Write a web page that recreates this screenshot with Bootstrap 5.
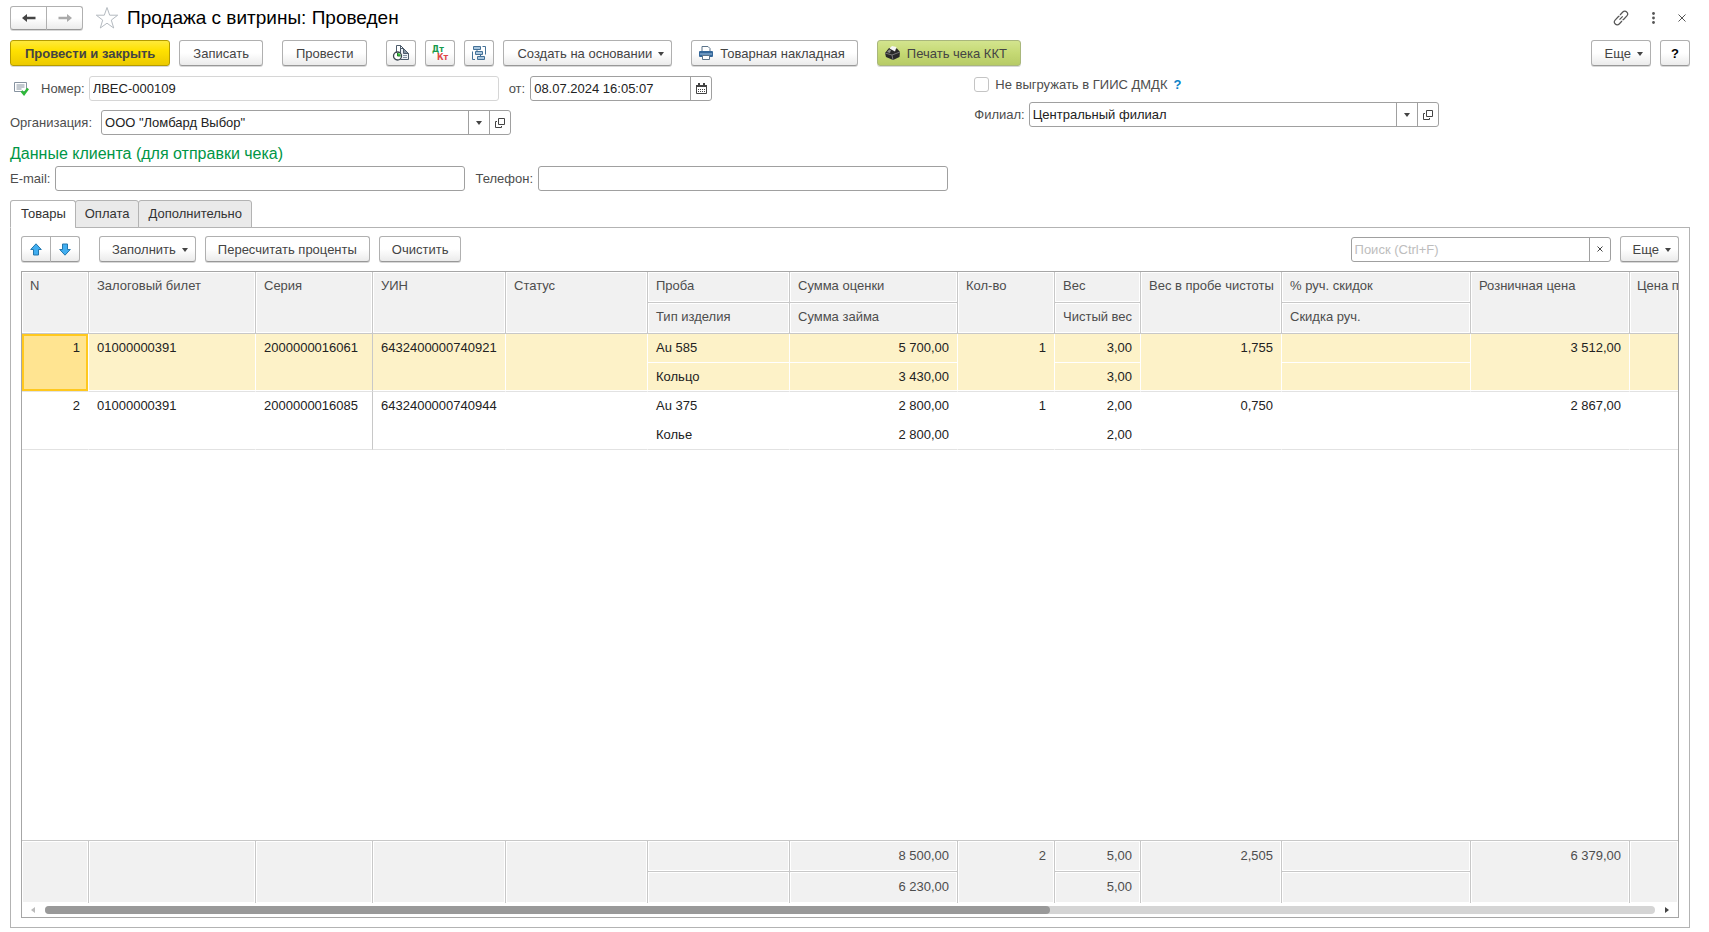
<!DOCTYPE html>
<html lang="ru">
<head>
<meta charset="utf-8">
<meta name="viewport" content="width=device-width, initial-scale=1">
<title>Продажа с витрины: Проведен</title>
<link href="https://cdn.jsdelivr.net/npm/bootstrap@5.3.0/dist/css/bootstrap.min.css" rel="stylesheet">
<style>
  :root { --line: #a6a6a6; --soft: #c8c8c8; --head: #f1f1f1; --ink: #4d4d4d; }
  body { font: 13px/17px "Liberation Sans", Arial, sans-serif; color: var(--ink); background: #fff; }
  .page { padding: 6px 19px 4px 10px; }
  h1 { font-size: 19px; line-height: 24px; color: #000; }
  h2 { font-size: 16px; line-height: 18px; color: #009646; margin: 10px 0 3px; }

  .btn {
    --bs-btn-font-size: 13px; --bs-btn-line-height: 17px; --bs-btn-padding-y: 0; --bs-btn-padding-x: 13px;
    --bs-btn-color: #444; --bs-btn-border-color: #b0b0b0; --bs-btn-border-radius: 3px;
    --bs-btn-hover-color: #222; --bs-btn-hover-border-color: #909090;
    height: 26px; display: inline-flex; align-items: center; justify-content: center; white-space: nowrap;
    background: linear-gradient(#fff 50%, #ebebeb); border-bottom-color: #989898; box-shadow: 0 1px 0 #d8d8d8;
  }
  .btn-main { --bs-btn-padding-x: 14px; font-weight: bold; background: linear-gradient(#ffe93b, #ffe100 40%, #ecca00); border-color: #b59c00; }
  .btn-pic { --bs-btn-padding-x: 12px; padding-left: 6px; gap: 6px; }
  .btn-receipt { --bs-btn-padding-x: 13px; background: linear-gradient(#d3e48e, #c5d974 50%, #b7cb66); border-color: #a9b77c; }
  .btn-square { --bs-btn-padding-x: 0; width: 30px; }
  .btn.dropdown-toggle { padding-right: 7px; }
  .btn.dropdown-toggle::after { border-width: 4px 3px 0; margin-left: 6px; margin-top: 2px; }
  .nav-pair .btn { height: 24px; width: 37px; --bs-btn-padding-x: 0; }
  .panel .btn { --bs-btn-padding-x: 12px; }
  .panel .move-pair .btn { width: 30px; --bs-btn-padding-x: 0; }
  .plain { border: 0; background: none; padding: 0; display: inline-flex; }
  .bar { gap: 9px; }
  .tb-gap { margin-left: 10px; }
  .window-tools { gap: 22px; }

  .fld { height: 25px; border: 1px solid #a0a0a0; border-radius: 3px; width: 410px; display: flex; background: #fff; }
  .fld input { flex: 1; min-width: 0; border: 0; outline: 0; background: none; padding: 0 3px; color: #222; border-radius: 3px; }
  .fld button { border: 0; border-left: 1px solid #a0a0a0; background: none; width: 21px; padding: 0; display: flex; align-items: center; justify-content: center; }
  .fld input::placeholder { color: #bdbdbd; opacity: 1; }
  .fld.readonly { border-color: #d6d6d6; }
  .fld.date { width: 182px; }
  .fld.search { width: 260px; }
  .cap { margin-right: 5px; }
  .cap-next { margin-left: 10px; }
  .line-top { margin-top: 10px; }
  .line-next { margin-top: 9px; }
  .col-left { width: 57.4%; }
  .form-check-input { width: 15px; height: 15px; margin: 0 6px 0 0; border-color: #c4c4c4; border-radius: 3px !important; }
  .hint { color: #0a82c8; text-decoration: none; font-weight: bold; margin-left: 6px; }

  .nav-tabs { --bs-nav-tabs-border-width: 0; margin-top: 9px; position: relative; z-index: 1; margin-bottom: -1px; }
  .nav-tabs .nav-link { height: 28px; padding: 0 9px 2px; margin: 0 0 0 -1px; border: 1px solid #b3b3b3; border-radius: 3px 3px 0 0; background: #eaeaea; color: #333; }
  .nav-tabs .nav-item:first-child .nav-link { margin-left: 0; padding-left: 10px; }
  .nav-tabs .nav-link.active { background: #fff; border-color: #b3b3b3 #b3b3b3 #fff; color: #333; }
  .panel { border: 1px solid #b3b3b3; padding: 8px 10px 9px; }

  .grid { border: 1px solid var(--line); margin-top: 9px; overflow: hidden; }
  .grid table { width: 100%; table-layout: fixed; border-collapse: separate; border-spacing: 0; }
  .grid th, .grid td { font-weight: normal; vertical-align: top; padding: 6px 8px 0; white-space: nowrap; overflow: hidden; border-right: 1px solid transparent; }
  .grid th.edge { border-right: 0; padding-left: 7px; padding-right: 0; }
  .grid td.edge { border-right: 0; }
  .sum td, .grid th { height: 31px; background: var(--head); border-right-color: var(--soft); border-bottom: 1px solid var(--soft); box-shadow: inset 0 0 0 1px #fff; }
  .grid .sum { border-top: 1px solid var(--soft); }
  .sum tr:last-child td, .sum td[rowspan] { border-bottom: 0; }
  .rows td { height: 29px; color: #222; }
  .rows tr:nth-child(even) td, .rows td[rowspan] { border-bottom: 1px solid #e2e2e2; }
  .rows .series { border-right-color: var(--soft); }
  .rows .picked td { background: #fdf2c8; border-right-color: #fff; box-shadow: inset 0 -1px 0 #fff; }
  .rows .picked .series { border-right-color: var(--soft); }
  .rows .picked .current { background: #ffe491; box-shadow: inset 0 0 0 2px #ffc81e; }
  .grid th, .grid .rows td { padding-top: 5px; }
  .track { height: 8px; border-radius: 4px; background: #d5d5d5; }
  .thumb { height: 8px; border-radius: 4px; background: #999; width: 62.4%; }
  .scroll { padding: 3px 9px; height: 14px; gap: 9px; }
</style>
</head>
<body>
<div class="page min-vh-100 d-flex flex-column">

  <header class="d-flex align-items-center">
    <div class="btn-group nav-pair">
      <button class="btn" type="button" aria-label="Назад"><svg width="16" height="12" viewBox="0 0 16 12"><path d="M1 6l5-4v2.800h8.500v2.400H6V10z" fill="#444"/></svg></button>
      <button class="btn" type="button" aria-label="Вперед"><svg width="16" height="12" viewBox="0 0 16 12"><path d="M15 6l-5-4v2.800H1.500v2.400H10V10z" fill="#aaa"/></svg></button>
    </div>
    <button class="plain ms-2 me-2 ps-1" type="button" aria-label="В избранное"><svg width="24" height="24" viewBox="0 0 24 24"><path d="M12 1.500l2.700 7.700h8l-6.400 4.900 2.400 7.900-6.700-4.800L5.300 22l2.400-7.900L1.300 9.200h8z" fill="#fff" stroke="#b4bac0"/></svg></button>
    <h1 class="m-0">Продажа с витрины: Проведен</h1>
    <div class="ms-auto d-flex align-items-center window-tools me-1">
      <button class="plain" type="button" aria-label="Ссылка"><svg width="16" height="16" viewBox="0 0 16 16" fill="none" stroke="#555" stroke-width="1.200"><path d="M7 5l2.800-3a2.700 2.700 0 0 1 3.900 0 2.700 2.700 0 0 1 .2 3.800L11 9a2.500 2.500 0 0 1-1.500.8M9 11l-2.800 3a2.700 2.700 0 0 1-3.900 0 2.700 2.700 0 0 1-.2-3.800L5 7a2.500 2.500 0 0 1 1.500-.8M6.500 9.700l3.200-3.400"/></svg></button>
      <button class="plain" type="button" aria-label="Меню"><svg width="5" height="12" viewBox="0 0 5 12" fill="#555"><circle cx="2.500" cy="1.500" r="1.400"/><circle cx="2.500" cy="6" r="1.400"/><circle cx="2.500" cy="10.500" r="1.400"/></svg></button>
      <button class="plain" type="button" aria-label="Закрыть"><svg width="8" height="8" viewBox="0 0 8 8" stroke="#555"><path d="M.5.5l7 7M7.500.5l-7 7"/></svg></button>
    </div>
  </header>

  <div class="d-flex bar line-top">
    <button class="btn btn-main" type="button">Провести и закрыть</button>
    <button class="btn" type="button">Записать</button>
    <button class="btn tb-gap" type="button">Провести</button>
    <button class="btn btn-square tb-gap" type="button" aria-label="История"><svg width="18" height="18" viewBox="0 0 18 18"><path d="M4.500 8V1.500H8.500V5" fill="#fff" stroke="#4c5b6b"/><path d="M8.500 15.500v-11h3l5 5v6z" fill="#eef2f6" stroke="#4c5b6b"/><path d="M8.500 1.500l3 3v5h5l-5-5z" fill="#8494a4" stroke="#4c5b6b"/><path d="M11 11.500h4M11 13.500h4" stroke="#8494a4"/><circle cx="5.500" cy="12" r="4" fill="#fff" stroke="#3c4650" stroke-width="1.300"/><path d="M5.500 12V9a3 3 0 0 1 3 3z" fill="#37c837"/><path d="M5.500 9v3h3" stroke="#237a2c" fill="none"/></svg></button>
    <button class="btn btn-square" type="button" aria-label="Проводки"><svg width="20" height="20" viewBox="0 0 20 20" font-family="DejaVu Sans, sans-serif" font-weight="bold" font-size="8"><text x="2" y="9" fill="#189a4c">Дт</text><text x="7" y="17" fill="#df4747">Кт</text></svg></button>
    <button class="btn btn-square" type="button" aria-label="Структура"><svg width="16" height="16" viewBox="0 0 16 16" fill="#a9c6de" stroke="#447197"><path d="M2.500 1.500h7v3h-7zM4.500 6.500h7v3h-7zM6.500 11.500h7v3h-7z"/><path d="M11.500 1.500h3v8M4 14.500H1.500v-8M6 4.500v2M9.500 9.500v2" fill="none"/></svg></button>
    <button class="btn dropdown-toggle" type="button">Создать на основании</button>
    <button class="btn btn-pic tb-gap" type="button"><svg width="16" height="16" viewBox="0 0 16 16"><path d="M4 6V1.500h6l2 2V6" fill="#fff" stroke="#5b7389"/><rect x="1" y="6" width="14" height="6" rx="1" fill="#34679a"/><path d="M2 9h12" stroke="#9fc3e2"/><path d="M4.500 10.500h7v4h-7z" fill="#fff" stroke="#5b7389"/></svg>Товарная накладная</button>
    <button class="btn btn-pic btn-receipt tb-gap" type="button"><svg width="17" height="15" viewBox="0 0 17 15"><path d="M1 7l4-5 8 .5 3 3.500-.5 5-6.500 3L2 11z" fill="#292929"/><path d="M5.500 2.500L8 0l4.500 1-1.500 4.500z" fill="#f5f5f5"/><path d="M1 7l7 2 8-3M8 9l1 5" stroke="#777" fill="none"/><path d="M3 6l2-2.500 2 .5-1 3z" fill="#8a8a8a"/></svg>Печать чека ККТ</button>
    <button class="btn dropdown-toggle ms-auto" type="button">Еще</button>
    <button class="btn btn-square" type="button"><b class="text-black">?</b></button>
  </div>

  <div class="d-flex line-top">
    <div class="col-left">
      <div class="d-flex align-items-center">
        <svg class="ms-1 me-2" width="15" height="14" viewBox="0 0 15 14"><path d="M.5.500h12v9H.5z" fill="#fff" stroke="#8793a0"/><path d="M2.500 3h8M2.500 5h8M2.500 7h5" stroke="#8793a0"/><path d="M7.500 9l2.500 3 4-5.500" stroke="#2eb83a" stroke-width="2.500" fill="none"/></svg>
        <label for="num" class="ps-1 me-1">Номер:</label>
        <div class="fld readonly"><input id="num" value="ЛВЕС-000109" readonly></div>
        <label for="dt" class="cap cap-next">от:</label>
        <div class="fld date"><input id="dt" value="08.07.2024 16:05:07"><button type="button" aria-label="Календарь"><svg width="11" height="11" viewBox="0 0 11 11"><path d="M.5 2.500h10v8H.5z" fill="#fff" stroke="#444"/><path d="M0 3h11" stroke="#444" stroke-width="2"/><path d="M3 0v2M8 0v2" stroke="#444" stroke-width="2"/><path d="M2 6.500h7M2 8.500h7" stroke="#444" stroke-dasharray="1 1"/></svg></button></div>
      </div>
      <div class="d-flex align-items-center line-next">
        <label for="org" class="cap pe-1">Организация:</label>
        <div class="fld"><input id="org" value="ООО &quot;Ломбард Выбор&quot;"><button type="button" aria-label="Выбрать"><svg width="6" height="4" viewBox="0 0 6 4"><path d="M0 0h6L3 4z" fill="#444"/></svg></button><button type="button" aria-label="Открыть"><svg width="10" height="10" viewBox="0 0 10 10" fill="none" stroke="#444"><path d="M3.500.5h6v6h-6zM2 3.500H.5v6h6V8"/></svg></button></div>
      </div>
    </div>
    <div>
      <div class="d-flex align-items-center">
        <input class="form-check-input" type="checkbox" id="noexp"><label for="noexp">Не выгружать в ГИИС ДМДК</label><a href="#" class="hint">?</a>
      </div>
      <div class="d-flex align-items-center line-next">
        <label for="fil" class="me-1">Филиал:</label>
        <div class="fld"><input id="fil" value="Центральный филиал"><button type="button" aria-label="Выбрать"><svg width="6" height="4" viewBox="0 0 6 4"><path d="M0 0h6L3 4z" fill="#444"/></svg></button><button type="button" aria-label="Открыть"><svg width="10" height="10" viewBox="0 0 10 10" fill="none" stroke="#444"><path d="M3.500.5h6v6h-6zM2 3.500H.5v6h6V8"/></svg></button></div>
      </div>
    </div>
  </div>

  <h2>Данные клиента (для отправки чека)</h2>
  <div class="d-flex align-items-center">
    <label for="mail" class="cap">E-mail:</label>
    <div class="fld"><input id="mail" type="email"></div>
    <label for="tel" class="cap cap-next">Телефон:</label>
    <div class="fld"><input id="tel" type="tel"></div>
  </div>

  <ul class="nav nav-tabs">
    <li class="nav-item"><button class="nav-link active" type="button">Товары</button></li>
    <li class="nav-item"><button class="nav-link" type="button">Оплата</button></li>
    <li class="nav-item"><button class="nav-link" type="button">Дополнительно</button></li>
  </ul>

  <main class="panel flex-grow-1 d-flex flex-column">
    <div class="d-flex align-items-center bar">
      <div class="btn-group move-pair">
        <button class="btn" type="button" aria-label="Вверх"><svg width="12" height="13" viewBox="0 0 12 13"><path d="M6 .8l5.300 5.700H8.500v5.500h-5V6.500H.7z" fill="#41aef0" stroke="#2477ad"/></svg></button>
        <button class="btn" type="button" aria-label="Вниз"><svg width="12" height="13" viewBox="0 0 12 13"><path d="M6 12.200l5.300-5.700H8.500V1h-5v5.500H.7z" fill="#41aef0" stroke="#2477ad"/></svg></button>
      </div>
      <button class="btn dropdown-toggle tb-gap" type="button">Заполнить</button>
      <button class="btn" type="button">Пересчитать проценты</button>
      <button class="btn" type="button">Очистить</button>
      <div class="fld search ms-auto"><input type="text" placeholder="Поиск (Ctrl+F)" aria-label="Поиск"><button type="button" aria-label="Очистить поиск"><svg width="6" height="6" viewBox="0 0 6 6" stroke="#444"><path d="M.5.5l5 5M5.500.5l-5 5"/></svg></button></div>
      <button class="btn dropdown-toggle" type="button">Еще</button>
    </div>

    <div class="grid flex-grow-1 d-flex flex-column">
      <table>
        <colgroup><col style="width:67px"><col style="width:167px"><col style="width:117px"><col style="width:133px"><col style="width:142px"><col style="width:142px"><col style="width:168px"><col style="width:97px"><col style="width:86px"><col style="width:141px"><col style="width:189px"><col style="width:159px"><col></colgroup>
        <thead>
          <tr><th rowspan="2">N</th><th rowspan="2">Залоговый билет</th><th rowspan="2">Серия</th><th rowspan="2">УИН</th><th rowspan="2">Статус</th><th>Проба</th><th>Сумма оценки</th><th rowspan="2">Кол-во</th><th>Вес</th><th rowspan="2">Вес в пробе чистоты</th><th>% руч. скидок</th><th rowspan="2">Розничная цена</th><th rowspan="2" class="edge">Цена п</th></tr>
          <tr><th>Тип изделия</th><th>Сумма займа</th><th>Чистый вес</th><th>Скидка руч.</th></tr>
        </thead>
        <tbody class="rows">
          <tr class="picked"><td rowspan="2" class="current text-end">1</td><td rowspan="2">01000000391</td><td rowspan="2" class="series">2000000016061</td><td rowspan="2">6432400000740921</td><td rowspan="2"></td><td>Au 585</td><td class="text-end">5 700,00</td><td rowspan="2" class="text-end">1</td><td class="text-end">3,00</td><td rowspan="2" class="text-end">1,755</td><td></td><td rowspan="2" class="text-end">3 512,00</td><td rowspan="2" class="edge"></td></tr>
          <tr class="picked"><td>Кольцо</td><td class="text-end">3 430,00</td><td class="text-end">3,00</td><td></td></tr>
          <tr><td rowspan="2" class="text-end">2</td><td rowspan="2">01000000391</td><td rowspan="2" class="series">2000000016085</td><td rowspan="2">6432400000740944</td><td rowspan="2"></td><td>Au 375</td><td class="text-end">2 800,00</td><td rowspan="2" class="text-end">1</td><td class="text-end">2,00</td><td rowspan="2" class="text-end">0,750</td><td></td><td rowspan="2" class="text-end">2 867,00</td><td rowspan="2" class="edge"></td></tr>
          <tr><td>Колье</td><td class="text-end">2 800,00</td><td class="text-end">2,00</td><td></td></tr>
        </tbody>
      </table>
      <table class="sum mt-auto">
        <colgroup><col style="width:67px"><col style="width:167px"><col style="width:117px"><col style="width:133px"><col style="width:142px"><col style="width:142px"><col style="width:168px"><col style="width:97px"><col style="width:86px"><col style="width:141px"><col style="width:189px"><col style="width:159px"><col></colgroup>
        <tbody>
          <tr><td rowspan="2"></td><td rowspan="2"></td><td rowspan="2"></td><td rowspan="2"></td><td rowspan="2"></td><td></td><td class="text-end">8 500,00</td><td rowspan="2" class="text-end">2</td><td class="text-end">5,00</td><td rowspan="2" class="text-end">2,505</td><td></td><td rowspan="2" class="text-end">6 379,00</td><td rowspan="2" class="edge"></td></tr>
          <tr><td></td><td class="text-end">6 230,00</td><td class="text-end">5,00</td><td></td></tr>
        </tbody>
      </table>
      <div class="scroll d-flex align-items-center">
        <svg width="5" height="6" viewBox="0 0 5 6"><path d="M4 0v6L0 3z" fill="#bbb"/></svg>
        <div class="track flex-grow-1"><div class="thumb"></div></div>
        <svg width="5" height="6" viewBox="0 0 5 6"><path d="M1 0v6l4-3z" fill="#444"/></svg>
      </div>
    </div>
  </main>
</div>
<script src="https://cdn.jsdelivr.net/npm/bootstrap@5.3.0/dist/js/bootstrap.bundle.min.js"></script>
</body>
</html>
